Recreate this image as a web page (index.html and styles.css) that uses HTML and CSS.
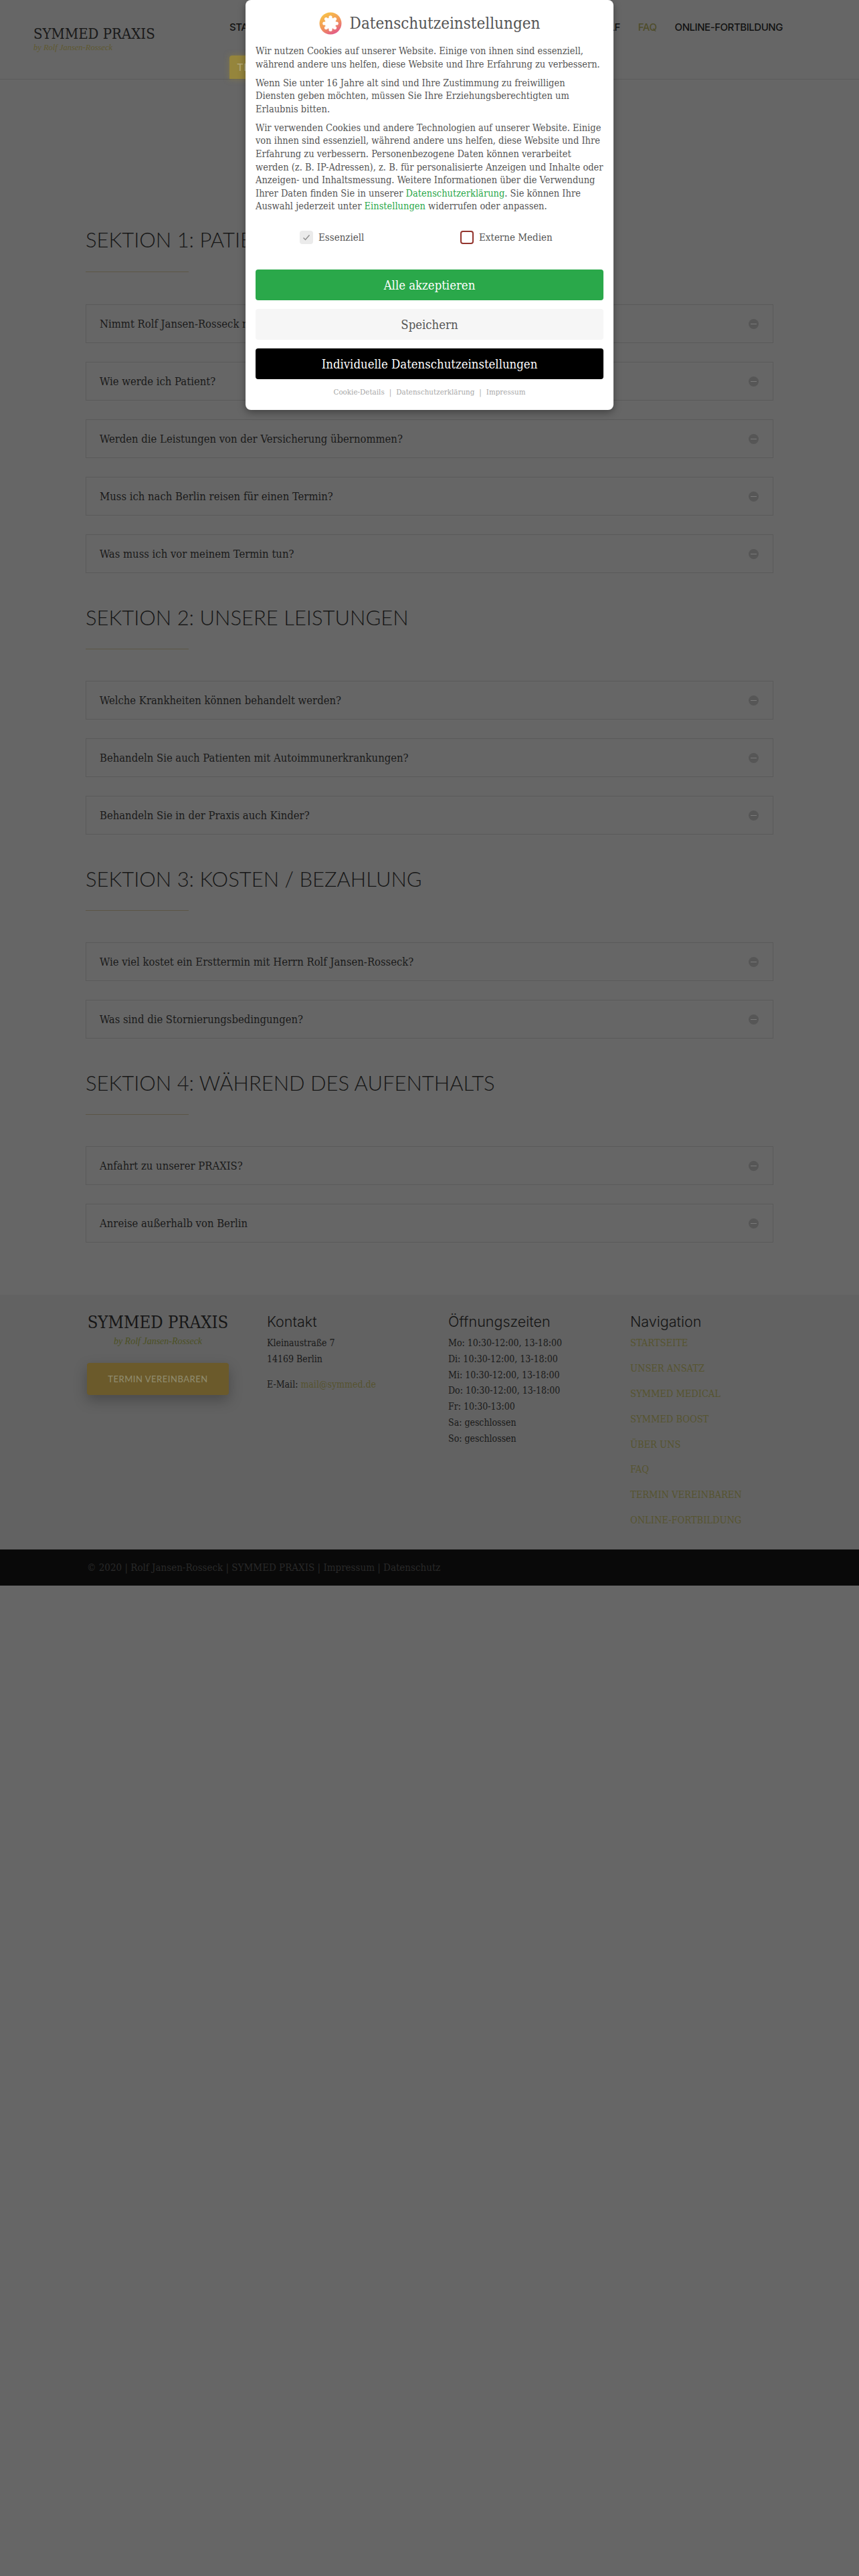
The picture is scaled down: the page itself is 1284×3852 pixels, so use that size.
FILE: index.html
```html
<!DOCTYPE html>
<html lang="de">
<head>
<meta charset="utf-8">
<title>FAQ – SYMMED PRAXIS</title>
<link rel="stylesheet" href="styles.css">
</head>
<body>
<header class="site-header">
  <a class="brand" href="#">
    <span class="brand-name">SYMMED PRAXIS</span>
    <span class="brand-by">by Rolf Jansen-Rosseck</span>
  </a>
  <div class="header-nav">
    <nav class="nav-row">
      <a href="#">STARTSEITE</a>
      <a href="#">UNSER ANSATZ</a>
      <a href="#">SYMMED MEDICAL</a>
      <a class="nav-push" href="#">ÜBER ROLF</a>
      <a class="nav-current" href="#">FAQ</a>
      <a href="#">ONLINE-FORTBILDUNG</a>
    </nav>
    <a class="nav-button" href="#">TERMIN VEREINBAREN</a>
  </div>
</header>

<main class="content">
  <section class="faq-section">
    <h2 class="faq-title">SEKTION 1: PATIENTEN</h2>
    <div class="faq-rule"></div>
    <div class="faq-item"><span>Nimmt Rolf Jansen-Rosseck noch neue Patienten an?</span><i class="faq-icon"></i></div>
    <div class="faq-item"><span>Wie werde ich Patient?</span><i class="faq-icon"></i></div>
    <div class="faq-item"><span>Werden die Leistungen von der Versicherung übernommen?</span><i class="faq-icon"></i></div>
    <div class="faq-item"><span>Muss ich nach Berlin reisen für einen Termin?</span><i class="faq-icon"></i></div>
    <div class="faq-item"><span>Was muss ich vor meinem Termin tun?</span><i class="faq-icon"></i></div>
  </section>
  <section class="faq-section">
    <h2 class="faq-title">SEKTION 2: UNSERE LEISTUNGEN</h2>
    <div class="faq-rule"></div>
    <div class="faq-item"><span>Welche Krankheiten können behandelt werden?</span><i class="faq-icon"></i></div>
    <div class="faq-item"><span>Behandeln Sie auch Patienten mit Autoimmunerkrankungen?</span><i class="faq-icon"></i></div>
    <div class="faq-item"><span>Behandeln Sie in der Praxis auch Kinder?</span><i class="faq-icon"></i></div>
  </section>
  <section class="faq-section">
    <h2 class="faq-title">SEKTION 3: KOSTEN / BEZAHLUNG</h2>
    <div class="faq-rule"></div>
    <div class="faq-item"><span>Wie viel kostet ein Ersttermin mit Herrn Rolf Jansen-Rosseck?</span><i class="faq-icon"></i></div>
    <div class="faq-item"><span>Was sind die Stornierungsbedingungen?</span><i class="faq-icon"></i></div>
  </section>
  <section class="faq-section">
    <h2 class="faq-title">SEKTION 4: WÄHREND DES AUFENTHALTS</h2>
    <div class="faq-rule"></div>
    <div class="faq-item"><span>Anfahrt zu unserer PRAXIS?</span><i class="faq-icon"></i></div>
    <div class="faq-item"><span>Anreise außerhalb von Berlin</span><i class="faq-icon"></i></div>
  </section>
</main>

<footer class="site-footer">
  <div class="footer-grid">
    <div class="footer-col">
      <div class="footer-brand">
        <span class="footer-brand-name">SYMMED PRAXIS</span>
        <span class="footer-brand-by">by Rolf Jansen-Rosseck</span>
      </div>
      <a class="footer-button" href="#">TERMIN VEREINBAREN</a>
    </div>
    <div class="footer-col">
      <h3 class="footer-title">Kontakt</h3>
      <p class="footer-line">Kleinaustraße 7</p>
      <p class="footer-line">14169 Berlin</p>
      <p class="footer-line footer-mail">E-Mail: <a href="#">mail@symmed.de</a></p>
    </div>
    <div class="footer-col">
      <h3 class="footer-title">Öffnungszeiten</h3>
      <p class="footer-line">Mo: 10:30-12:00, 13-18:00</p>
      <p class="footer-line">Di: 10:30-12:00, 13-18:00</p>
      <p class="footer-line">Mi: 10:30-12:00, 13-18:00</p>
      <p class="footer-line">Do: 10:30-12:00, 13-18:00</p>
      <p class="footer-line">Fr: 10:30-13:00</p>
      <p class="footer-line">Sa: geschlossen</p>
      <p class="footer-line">So: geschlossen</p>
    </div>
    <div class="footer-col">
      <h3 class="footer-title">Navigation</h3>
      <ul class="footer-nav">
        <li><a href="#">STARTSEITE</a></li>
        <li><a href="#">UNSER ANSATZ</a></li>
        <li><a href="#">SYMMED MEDICAL</a></li>
        <li><a href="#">SYMMED BOOST</a></li>
        <li><a href="#">ÜBER UNS</a></li>
        <li><a href="#">FAQ</a></li>
        <li><a href="#">TERMIN VEREINBAREN</a></li>
        <li><a href="#">ONLINE-FORTBILDUNG</a></li>
      </ul>
    </div>
  </div>
</footer>
<div class="copyright">
  <p class="copyright-text">© 2020 | Rolf Jansen-Rosseck | SYMMED PRAXIS | <a href="#">Impressum</a> | <a href="#">Datenschutz</a></p>
</div>

<div class="consent" role="dialog">
  <div class="consent-head">
    <svg class="consent-logo" viewBox="0 0 34 34" width="34" height="34" aria-hidden="true">
      <defs>
        <linearGradient id="lg" x1="0.2" y1="0.05" x2="0.7" y2="1">
          <stop offset="0" stop-color="#f8c24a"/>
          <stop offset="0.5" stop-color="#f29a58"/>
          <stop offset="1" stop-color="#e2578a"/>
        </linearGradient>
      </defs>
      <circle cx="17" cy="17" r="16.5" fill="url(#lg)"/>
      <g fill="#fff">
        <circle cx="17" cy="17" r="8.5"/>
        <circle cx="17" cy="7.8" r="2.6"/>
        <circle cx="23.5" cy="10.5" r="2.6"/>
        <circle cx="26.2" cy="17" r="2.6"/>
        <circle cx="23.5" cy="23.5" r="2.6"/>
        <circle cx="17" cy="26.2" r="2.6"/>
        <circle cx="10.5" cy="23.5" r="2.6"/>
        <circle cx="7.8" cy="17" r="2.6"/>
        <circle cx="10.5" cy="10.5" r="2.6"/>
      </g>
    </svg>
    <h2 class="consent-title">Datenschutzeinstellungen</h2>
  </div>
  <p class="consent-text">Wir nutzen Cookies auf unserer Website. Einige von ihnen sind essenziell,<br>während andere uns helfen, diese Website und Ihre Erfahrung zu verbessern.</p>
  <p class="consent-text">Wenn Sie unter 16 Jahre alt sind und Ihre Zustimmung zu freiwilligen<br>Diensten geben möchten, müssen Sie Ihre Erziehungsberechtigten um<br>Erlaubnis bitten.</p>
  <p class="consent-text">Wir verwenden Cookies und andere Technologien auf unserer Website. Einige<br>von ihnen sind essenziell, während andere uns helfen, diese Website und Ihre<br>Erfahrung zu verbessern. Personenbezogene Daten können verarbeitet<br>werden (z. B. IP-Adressen), z. B. für personalisierte Anzeigen und Inhalte oder<br>Anzeigen- und Inhaltsmessung. Weitere Informationen über die Verwendung<br>Ihrer Daten finden Sie in unserer <a href="#">Datenschutzerklärung</a>. Sie können Ihre<br>Auswahl jederzeit unter <a href="#">Einstellungen</a> widerrufen oder anpassen.</p>
  <div class="consent-options">
    <label class="consent-option">
      <span class="check check-on">
        <svg viewBox="0 0 12 12" width="12" height="12" aria-hidden="true"><path d="M1.5 6.5 4.5 9.5 10.5 2.5" fill="none" stroke="#8d8d8d" stroke-width="1.4"/></svg>
      </span>
      Essenziell
    </label>
    <label class="consent-option">
      <span class="check check-off"></span>
      Externe Medien
    </label>
  </div>
  <div class="consent-buttons">
    <button class="btn btn-accept">Alle akzeptieren</button>
    <button class="btn btn-save">Speichern</button>
    <button class="btn btn-custom">Individuelle Datenschutzeinstellungen</button>
  </div>
  <div class="consent-links"><a href="#">Cookie-Details</a><span>|</span><a href="#">Datenschutzerklärung</a><span>|</span><a href="#">Impressum</a></div>
</div>
</body>
</html>
```

FILE: styles.css
```css
* { box-sizing: border-box; }
html, body { margin: 0; padding: 0; }
body {
  position: relative;
  min-height: 3852px;
  background: #666;
  color: #161616;
  font-family: "DejaVu Serif Condensed", "DejaVu Serif", serif;
}
a { color: inherit; text-decoration: none; }
p, h2, h3, ul { margin: 0; padding: 0; }
ul { list-style: none; }

/* header */
.site-header {
  display: flex;
  height: 119px;
  padding: 0 114px 0 50px;
  border-bottom: 1px solid #5b5b5b;
}
.brand { flex: none; display: flex; flex-direction: column; width: 293px; padding-top: 36px; }
.brand-name { font-size: 22px; line-height: 30px; color: #191919; white-space: nowrap; }
.brand-by { font: italic 12.5px/16px "Liberation Serif", serif; color: #5f5930; margin-top: -3px; }
.header-nav { flex: 1; min-width: 0; padding-top: 32px; }
.nav-row {
  display: flex;
  gap: 27px;
  font: 500 15px/18px Inter, "Liberation Sans", sans-serif;
  letter-spacing: -0.45px;
  color: #111;
  white-space: nowrap;
}
.nav-push { margin-left: auto; }
.nav-current { color: #4f4d2b; }
.nav-button {
  display: block;
  width: 210px;
  height: 35px;
  margin-top: 33px;
  padding-left: 11px;
  border-radius: 4px 4px 0 0;
  background: #95853c;
  box-shadow: 0 0 8px rgba(149, 133, 60, .6);
  color: #b3a878;
  font: 500 15px/35px Inter, sans-serif;
  letter-spacing: .4px;
}

/* main */
.content { width: 1028px; margin-left: 128px; padding-top: 173px; }
.faq-section { padding-top: 47px; }
.faq-title {
  font: 300 31px/38px Lato, sans-serif;
  color: #161616;
}
.faq-rule { width: 154px; height: 1px; margin: 28px 0 47px; background: #5c5646; }
.faq-section:first-child { padding-top: 46px; }
.faq-section:first-child .faq-title { line-height: 40px; }
.faq-section:first-child .faq-rule { margin-bottom: 48px; }
.faq-item {
  display: flex;
  align-items: center;
  justify-content: space-between;
  height: 58px;
  margin-bottom: 28px;
  padding: 0 21px 0 20px;
  border: 1px solid #5a5a5a;
  font-size: 16.5px;
  color: #1a1a1a;
}
.faq-item:last-child { margin-bottom: 0; }
.faq-icon {
  position: relative;
  flex: none;
  width: 15px;
  height: 15px;
  border-radius: 50%;
  background: #565656;
}
.faq-icon::after {
  content: "";
  position: absolute;
  left: 3px;
  right: 3px;
  top: 7px;
  height: 1px;
  background: #7b7b7b;
}

/* footer */
.site-footer {
  height: 381px;
  margin-top: 78px;
  padding: 26px 0 0 130px;
  background: #626262;
}
.footer-grid { display: grid; grid-template-columns: 269px 271px 272px 272px; }
.footer-brand { display: flex; flex-direction: column; align-items: center; width: 212px; }
.footer-brand-name { font-size: 25.5px; line-height: 30px; color: #161616; white-space: nowrap; }
.footer-brand-by { font: italic 14px/18px "Liberation Serif", serif; color: #4c5124; margin-top: 5px; }
.footer-button {
  display: block;
  width: 212px;
  height: 48px;
  margin-top: 23px;
  border-radius: 4px;
  background: #6b5a2b;
  box-shadow: 0 8px 20px rgba(0, 0, 0, .25);
  color: #8f8a6c;
  text-align: center;
  font: 500 13px/48px Lato, sans-serif;
  letter-spacing: .5px;
}
.footer-title { font: 300 21.5px/28px Inter, sans-serif; color: #141414; height: 35px; }
.footer-line { font-size: 14px; line-height: 23.8px; color: #191919; }
.footer-mail { margin-top: 14px; }
.footer-mail a { color: #56532f; }
.footer-nav { font-size: 14.5px; color: #56542f; }
.footer-nav li { height: 37.9px; line-height: 23.8px; }
.copyright { height: 54px; padding-left: 130px; background: #090909; }
.copyright-text { font-size: 15px; line-height: 54px; color: #2a2a2a; }

/* consent modal */
.consent {
  position: absolute;
  top: 0;
  left: 367px;
  width: 550px;
  height: 613px;
  padding: 18px 15px 0;
  border-radius: 8px;
  background: #fff;
  box-shadow: 0 4px 12px rgba(0, 0, 0, .35);
  color: #555;
}
.consent-head { display: flex; justify-content: center; align-items: center; gap: 12px; height: 34px; margin-bottom: 15px; }
.consent-title { font-size: 24px; font-weight: 400; line-height: 30px; color: #555; }
.consent-text { font-size: 14.5px; line-height: 19.6px; margin-bottom: 8.4px; white-space: nowrap; }
.consent-text a { color: #2aa84a; }
.consent-options { display: grid; grid-template-columns: 240px 240px; margin: 26px 0 0 66px; }
.consent-option { display: flex; align-items: center; gap: 8px; height: 20px; font-size: 15px; }
.check { flex: none; display: flex; align-items: center; justify-content: center; width: 20px; height: 20px; border-radius: 4px; }
.check-on { background: #ebebeb; }
.check-off { border: 2px solid #93352e; }
.consent-buttons { display: flex; flex-direction: column; gap: 13px; margin-top: 38px; }
.btn {
  display: block;
  width: 100%;
  height: 46px;
  border: 0;
  border-radius: 4px;
  font: 18.4px/46px "DejaVu Serif Condensed", serif;
}
.btn-accept { background: #2aa84a; color: #fff; }
.btn-save { background: #f6f6f6; color: #555; }
.btn-custom { background: #000; color: #fff; }
.consent-links { display: flex; justify-content: center; gap: 7px; margin-top: 10px; font-size: 11.5px; line-height: 18px; color: #a8a8a8; }
```
